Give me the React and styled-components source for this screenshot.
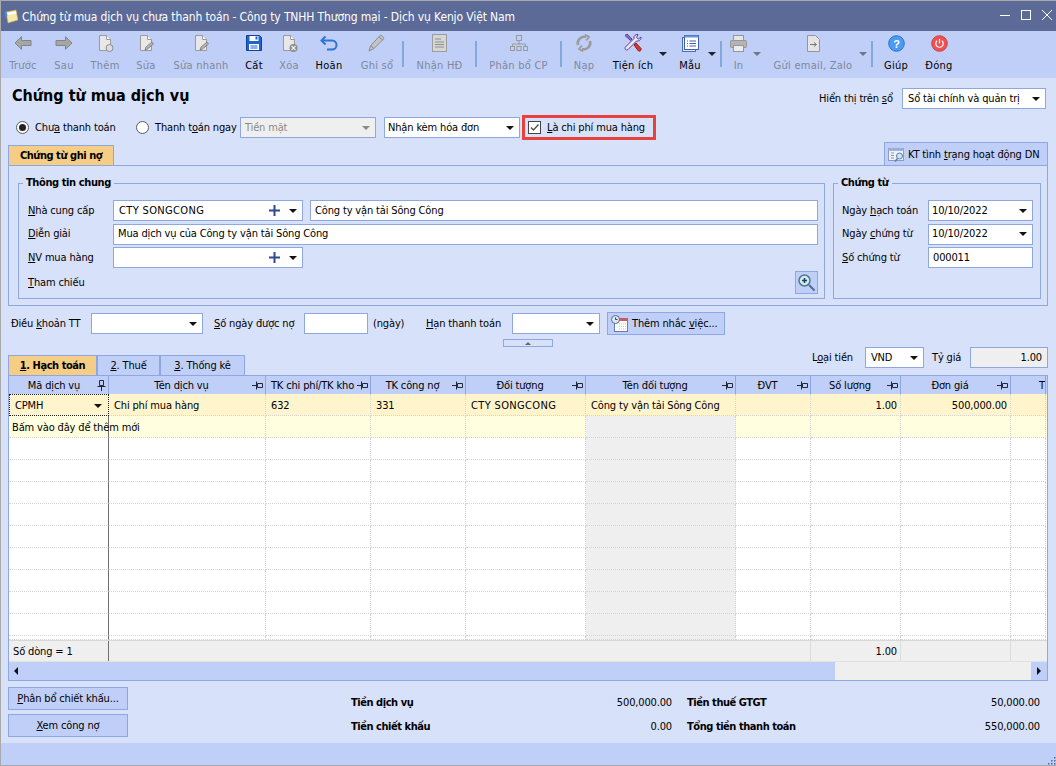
import styled, { createGlobalStyle } from 'styled-components'

const line = '#8ea7e0'
const soft = '#c0cff7'
const page = '#d8e1fa'

const GlobalStyle = createGlobalStyle`
  html, body { margin: 0; padding: 0; background: ${page}; }
  body {
    font: 11px/16px "DejaVu Sans Condensed", "DejaVu Sans", sans-serif;
    font-stretch: condensed;
    letter-spacing: -0.15px;
    color: #000;
  }
  * { box-sizing: border-box; }
  svg { flex: none; }
  u { text-underline-offset: 1px; }
`

const Window = styled.div`
  width: 1056px;
  height: 766px;
  display: flex;
  flex-direction: column;
  overflow: hidden;
  border-top: 1px solid #a9a9a9;
  border-bottom: 1px solid #a9a9a9;
  border-left: 1px solid #a9a9a9;
`
const TitleBar = styled.div`
  height: 30px;
  background: #5b6a97;
  color: #fff;
  display: flex;
  align-items: center;
  padding: 0 4px 0 3px;
`
const TitleText = styled.span`
  margin-left: 3px;
  padding-top: 1px;
  flex: 1;
  font-size: 12px;
  letter-spacing: -0.126px;
`
const WinButtons = styled.div`
  display: flex;
  align-items: center;
  gap: 11px;
  margin-bottom: 2px;
`
const Toolbar = styled.div`
  height: 47px;
  background: ${soft};
  display: flex;
  padding-left: 1px;
`
const Tool = styled.div`
  position: relative;
  width: ${p => p.$w}px;
  padding-top: 2px;
  display: flex;
  flex-direction: column;
  align-items: center;
  color: ${p => (p.$off ? '#7e889c' : '#000')};
`
const ToolIcon = styled.div`
  height: 20px;
  display: flex;
  align-items: center;
  justify-content: center;
`
const ToolLabel = styled.div`
  margin-top: 4px;
  line-height: 18px;
  letter-spacing: 0.25px;
  white-space: nowrap;
`
const ToolCaret = styled.span`
  position: absolute;
  top: 21px;
  right: ${p => p.$r}px;
  border: 4px solid transparent;
  border-top: 4px solid ${p => (p.$off ? '#6f7688' : '#1c2230')};
  border-bottom: 0;
`
const ToolSep = styled.div`
  width: 2px;
  height: 26px;
  margin-top: 10px;
  background: #82a8dc;
`
const Main = styled.div`
  flex: 1;
  padding: 0 8px 0 7px;
  display: flex;
  flex-direction: column;
  min-height: 0;
`
const HeadRow = styled.div`
  height: 37px;
  padding-top: 7px;
  display: flex;
`
const PageTitle = styled.h1`
  margin: 0;
  flex: 1;
  padding-left: 4px;
  font-size: 16px;
  line-height: 22px;
  font-weight: 700;
  letter-spacing: 0;
`
const BookLabel = styled.div`
  margin-top: 3px;
  width: 83px;
  line-height: 21px;
`
const BookCombo = styled.div`
  margin: 3px 2px 0 0;
`
const PayRow = styled.div`
  height: 25px;
  display: flex;
  align-items: center;
`
const Choice = styled.label`
  width: ${p => p.$w}px;
  display: flex;
  align-items: center;
  gap: 6px;
  margin-left: ${p => p.$ml || 0}px;
  white-space: nowrap;
`
const Radio = styled.span`
  width: 13px;
  height: 13px;
  border-radius: 50%;
  border: 1px solid #5c5c5c;
  background: #fff;
  display: flex;
  align-items: center;
  justify-content: center;
  &::after {
    content: '';
    display: ${p => (p.$on ? 'block' : 'none')};
    width: 7px;
    height: 7px;
    border-radius: 50%;
    background: #222;
  }
`
const ChoiceText = styled.span`
  padding-top: 1px;
`
const Field = styled.div`
  width: ${p => (p.$w ? `${p.$w}px` : 'auto')};
  flex: ${p => (p.$w ? 'none' : 1)};
  height: 21px;
  margin-left: ${p => p.$ml || 0}px;
  padding: 0 5px 0 ${p => p.$pl || 4}px;
  border: 1px solid ${line};
  background: ${p => (p.$gray ? '#efefef' : '#fff')};
  color: ${p => (p.$muted ? '#8a8a8a' : '#000')};
  display: flex;
  align-items: center;
  justify-content: ${p => (p.$right ? 'flex-end' : 'flex-start')};
  white-space: nowrap;
`
const FieldValue = styled.span`
  flex: ${p => (p.$right ? 'none' : 1)};
`
const Caps = styled.span`
  letter-spacing: 0.35px;
`
const Arrow = styled.span`
  width: 0;
  height: 0;
  margin-left: ${p => p.$ml ?? 6}px;
  border: 4px solid transparent;
  border-top: 4px solid ${p => (p.$muted ? '#8a8a8a' : '#111')};
  border-bottom: 0;
`
const CostBox = styled.div`
  width: 134px;
  height: 25px;
  margin-left: 2px;
  padding-left: 3px;
  border: 3px solid #e8423f;
  display: flex;
  align-items: center;
  gap: 6px;
  white-space: nowrap;
`
const CheckBox = styled.span`
  width: 13px;
  height: 13px;
  border: 1px solid #444;
  background: #fff;
  display: flex;
`
const TabRow = styled.div`
  height: 25px;
  display: flex;
  align-items: flex-end;
  justify-content: space-between;
`
const Tab = styled.div`
  width: ${p => p.$w}px;
  height: 20px;
  padding-top: 1px;
  border: 1px solid ${line};
  border-bottom: 0;
  background: ${p => (p.$on ? '#f5cd85' : soft)};
  font-weight: ${p => (p.$on ? 700 : 400)};
  letter-spacing: ${p => (p.$on ? '-0.45px' : '-0.15px')};
  display: flex;
  align-items: center;
  justify-content: center;
  white-space: nowrap;
`
const SideTab = styled(Tab)`
  height: 23px;
  gap: 2px;
  justify-content: flex-start;
  padding: 2px 0 0 3px;
`
const Panel = styled.div`
  height: 141px;
  padding: 17px 6px 6px 9px;
  border: 1px solid ${line};
  display: flex;
  gap: 8px;
`
const Group = styled.div`
  position: relative;
  flex: ${p => (p.$w ? 'none' : 1)};
  width: ${p => (p.$w ? `${p.$w}px` : 'auto')};
  height: 116px;
  padding: 16px 6px 0 ${p => p.$pl}px;
  border: 1px solid ${line};
  display: flex;
  flex-direction: column;
  gap: 2.5px;
`
const Legend = styled.div`
  position: absolute;
  top: -9px;
  left: 4px;
  padding: 0 3px;
  background: ${page};
  font-weight: 700;
  letter-spacing: -0.4px;
`
const FormRow = styled.div`
  height: 21px;
  display: flex;
  align-items: center;
`
const Label = styled.div`
  width: ${p => p.$w}px;
  flex: none;
  margin-left: ${p => p.$ml || 0}px;
  white-space: nowrap;
`
const RefRow = styled.div`
  height: 23px;
  margin-top: 0.5px;
  display: flex;
  align-items: center;
  justify-content: space-between;
`
const ZoomButton = styled.div`
  width: 23px;
  height: 23px;
  border: 1px solid ${line};
  background: ${soft};
  display: flex;
  align-items: center;
  justify-content: center;
`
const TermsRow = styled.div`
  height: 23px;
  margin-top: 6px;
  display: flex;
  align-items: center;
`
const RemindButton = styled.div`
  width: 118px;
  height: 23px;
  margin-left: 7px;
  padding-left: 3px;
  border: 1px solid ${line};
  background: ${soft};
  display: flex;
  align-items: center;
  gap: 4px;
  white-space: nowrap;
`
const Splitter = styled.div`
  width: 50px;
  height: 8px;
  margin: 4px 0 0 495px;
  border: 1px solid ${line};
  display: flex;
  align-items: center;
  justify-content: center;
  &::after {
    content: '';
    border: 3px solid transparent;
    border-bottom: 3px solid #666;
    border-top: 0;
  }
`
const GridTabs = styled.div`
  height: 28px;
  display: flex;
  align-items: flex-end;
`
const Currency = styled.div`
  margin-left: auto;
  align-self: flex-start;
  display: flex;
  align-items: center;
`
const GridBox = styled.div`
  height: 306px;
  border: 1px solid ${line};
  border-top: 0;
  display: flex;
  flex-direction: column;
  overflow: hidden;
`
const columns = '100px 157px 105px 95px 120px 150px 75px 90px 110px 35px'
const HeadCells = styled.div`
  height: 19px;
  flex: none;
  display: grid;
  grid-template-columns: ${columns};
  background: ${soft};
  border-top: 1px solid ${line};
`
const HeadCell = styled.div`
  border-right: 1px solid ${line};
  display: flex;
  align-items: center;
  padding: 1px 2px 0 ${p => p.$pl || 2}px;
  white-space: nowrap;
  overflow: hidden;
`
const HeadText = styled.span`
  flex: 1;
  text-align: ${p => (p.$left ? 'left' : 'center')};
`
const Row = styled.div`
  height: 22px;
  flex: none;
  display: grid;
  grid-template-columns: ${columns};
  background: ${p => p.$bg || '#fff'};
`
const Cell = styled.div`
  min-width: 0;
  padding: 2px ${p => (p.$num ? 3 : 0)}px 0 ${p => p.$pl ?? 5}px;
  border-right: 1px dotted #d4d4d4;
  border-bottom: 1px dotted #d4d4d4;
  background: ${p => (p.$gray ? '#efefef' : 'transparent')};
  display: flex;
  align-items: center;
  justify-content: ${p => (p.$num ? 'flex-end' : 'flex-start')};
  white-space: nowrap;
`
const FrozenCell = styled(Cell)`
  border-right: 1px solid #707070;
`
const FocusCell = styled(Cell)`
  border: 1px dotted #222;
  justify-content: space-between;
  padding: 1px 6px 0 5px;
`
const Filler = styled(Row)`
  height: 4px;
`
const FootRow = styled(Row)`
  background: #efefef;
  border-top: 1px solid #d8d8d8;
  border-bottom: 1px solid #e2e2e2;
`
const FootCell = styled.div`
  padding: 2px ${p => (p.$num ? 3 : 0)}px 0 ${p => p.$pl || 0}px;
  border-right: 1px solid ${p => p.$c || 'transparent'};
  display: flex;
  align-items: center;
  justify-content: ${p => (p.$num ? 'flex-end' : 'flex-start')};
`
const ScrollBar = styled.div`
  flex: 1;
  display: flex;
  background: #efefef;
`
const ScrollThumb = styled.div`
  width: 826px;
  background: ${soft};
  display: flex;
  align-items: center;
  padding-left: 5px;
`
const ScrollEnd = styled.div`
  width: 16px;
  margin-left: auto;
  background: ${soft};
  display: flex;
  align-items: center;
  justify-content: center;
`
const Tri = styled.span`
  border: 4px solid transparent;
  ${p => (p.$left
    ? 'border-right: 4px solid #111; border-left: 0;'
    : 'border-left: 4px solid #111; border-right: 0;')}
`
const Bottom = styled.div`
  flex: 1;
  display: flex;
`
const SideButtons = styled.div`
  width: 120px;
  padding-top: 6px;
  display: flex;
  flex-direction: column;
  gap: 4px;
`
const SideButton = styled.div`
  height: 23px;
  padding-top: 1px;
  border: 1px solid ${line};
  background: ${soft};
  display: flex;
  align-items: center;
  justify-content: center;
`
const Totals = styled.div`
  margin-left: 223px;
  padding-top: 10px;
  display: grid;
  grid-template-columns: 321px 353px;
  grid-auto-rows: 24px;
  column-gap: 15px;
`
const TotalItem = styled.div`
  display: flex;
  align-items: center;
  justify-content: space-between;
`
const TotalName = styled.span`
  font-weight: 700;
  letter-spacing: -0.45px;
`
const StatusBar = styled.div`
  position: relative;
  height: 22px;
  flex: none;
  background: ${soft};
`
const Grip = styled.svg`
  position: absolute;
  right: 0;
  bottom: 0;
`

// icons
const G = '#a6a6a6'
const GD = '#858585'

const ArrowLeftIcon = () => (
  <svg width="18" height="14" viewBox="0 0 18 14"><path d="M7.500.7 1 7l6.500 6.300V9.500h9.500v-5H7.500z" fill={G} stroke={GD} /></svg>
)
const ArrowRightIcon = () => (
  <svg width="18" height="14" viewBox="0 0 18 14"><path d="M10.500.7 17 7l-6.500 6.300V9.500H1v-5h9.500z" fill={G} stroke={GD} /></svg>
)
const Doc = ({ children }) => (
  <svg width="22" height="19" viewBox="0 0 22 19">
    <path d="M5.500 1.500h7l4 4v11h-11z" fill="#e8e8e8" stroke="#9a9a9a" />
    <path d="M12.500 1.500v4h4" fill="#fff" stroke="#9a9a9a" />
    {children}
  </svg>
)
const NewIcon = () => <Doc><circle cx="15.500" cy="14" r="3.500" fill="#ddd" stroke="#8b8b8b" /></Doc>
const EditIcon = () => <Doc><path d="m10 16 1-3 6-5 1.500 2-6 5z" fill="#b5b5b5" stroke="#777" strokeWidth=".8" /></Doc>
const DeleteIcon = () => (
  <Doc>
    <circle cx="15.500" cy="14" r="4" fill="#8e8e8e" />
    <path d="m13.500 12 4 4m0-4-4 4" stroke="#eee" strokeWidth="1.200" />
  </Doc>
)
const SaveIcon = () => (
  <svg width="18" height="18" viewBox="0 0 18 18">
    <path d="M1.500 1.500h13l2 2v13h-15z" fill="#1f63d0" stroke="#123f99" />
    <rect x="4.500" y="2" width="9" height="5" fill="#fff" />
    <rect x="10.500" y="2.500" width="2" height="3" fill="#1f63d0" />
    <rect x="4" y="10" width="10" height="6" fill="#fff" />
    <path d="M5.500 12h7m-7 2h7" stroke="#1f63d0" />
  </svg>
)
const UndoIcon = () => (
  <svg width="20" height="17" viewBox="0 0 20 17" fill="none">
    <path d="M3 5.500h10a4.500 4.500 0 0 1 0 9H8" stroke="#2e74d8" strokeWidth="2" />
    <path d="M6.500 1.500 2.500 5.500l4 4" stroke="#2e74d8" strokeWidth="2" />
  </svg>
)
const PencilIcon = () => (
  <svg width="20" height="20" viewBox="0 0 20 20">
    <path d="m2 18 1.500-5L13 2.500c1-1 4.500 2 3.500 3.500L7 15.500z" fill="#c4c4c4" stroke="#8d8d8d" />
    <path d="M4 13l3 2.500M12 4l3.500 3" stroke="#8d8d8d" />
  </svg>
)
const InvoiceIcon = () => (
  <svg width="16" height="19" viewBox="0 0 16 19">
    <rect x=".5" y=".5" width="14" height="17" fill="#d6d6d6" stroke="#9d9d9d" />
    <path d="M3 5h6m-6 3h9m-9 2.500h9m-9 2.500h9" stroke="#8f8f8f" />
  </svg>
)
const TreeIcon = () => (
  <svg width="20" height="18" viewBox="0 0 20 18" fill="none" stroke="#9a9a9a">
    <rect x="7.500" y="1.500" width="5" height="5" />
    <path d="M10 6.500v4M3.500 12v-2h13v2" />
    <rect x="1.500" y="12.500" width="4" height="4" />
    <rect x="8" y="12.500" width="4" height="4" />
    <rect x="14.500" y="12.500" width="4" height="4" />
  </svg>
)
const ReloadIcon = () => (
  <svg width="18" height="18" viewBox="0 0 18 18" fill="none" stroke="#9b9b9b" strokeWidth="2.600">
    <path d="M3 11a6.500 6.500 0 0 1 8-8" />
    <path d="M15 7a6.500 6.500 0 0 1-8 8" />
    <path d="m10 .5 4 2.500-3 3.500M8 17.500 4 15l3-3.500" strokeWidth="1.800" />
  </svg>
)
const ToolsIcon = () => (
  <svg width="20" height="20" viewBox="0 0 20 20">
    <path d="M15 1.500c-2.500-.5-4.500 1.500-4 4L2.500 14c-1.500 1.500.5 4 2.500 2.500L13.500 8c2.500.5 5-1.500 4.500-4l-2.500 2-2-1.500z" fill="#e8e4f5" stroke="#5b3c96" />
    <path d="M2 2.500 4 1l5 5-1.500 1.500z" fill="#8d6cc4" stroke="#5b3c96" />
    <path d="m11 12 2-2 5 5.500c.5 2-1 3-2.500 2.500z" fill="#e0322c" stroke="#90201c" />
  </svg>
)
const PagesIcon = () => (
  <svg width="17" height="17" viewBox="0 0 17 17">
    <rect x=".5" y="2.500" width="13" height="14" fill="#dce6fa" stroke="#4f6fae" />
    <rect x="2.500" y=".5" width="14" height="14" fill="#fff" stroke="#3a62ad" />
    <rect x="2.500" y=".5" width="14" height="2" fill="#6d93d8" />
    <path d="M5 6h1m1.500 0H14M5 8.500h1m1.500 0H14M5 11h1m1.500 0H14" stroke="#3a62ad" />
  </svg>
)
const PrintIcon = () => (
  <svg width="17" height="17" viewBox="0 0 17 17">
    <rect x="3.500" y=".5" width="10" height="6" fill="#e6e6e6" stroke="#969696" />
    <rect x=".5" y="5.500" width="16" height="7" rx="1" fill="#b4b4b4" stroke="#969696" />
    <rect x="3.500" y="10.500" width="10" height="6" fill="#ececec" stroke="#969696" />
  </svg>
)
const SendIcon = () => (
  <svg width="13" height="17" viewBox="0 0 13 17">
    <path d="M.5.500h8l4 4v12H.5z" fill="#e4e4e4" stroke="#969696" />
    <path d="M3 9.500h6m-2-2 2.500 2-2.500 2" fill="none" stroke="#777" />
  </svg>
)
const HelpIcon = () => (
  <svg width="17" height="17" viewBox="0 0 17 17">
    <circle cx="8.500" cy="8.500" r="7.800" fill="#4c9bf2" stroke="#2b6fcb" />
    <text x="8.500" y="12.500" textAnchor="middle" fontSize="11" fontWeight="700" fill="#fff" fontFamily="Liberation Sans">?</text>
  </svg>
)
const PowerIcon = () => (
  <svg width="17" height="17" viewBox="0 0 17 17" fill="none">
    <circle cx="8.500" cy="8.500" r="7.800" fill="#ec5350" stroke="#d43c3a" />
    <path d="M6 5.800a3.700 3.700 0 1 0 5 0M8.500 4v4.500" stroke="#fff" strokeWidth="1.200" />
  </svg>
)
const AppIcon = () => (
  <svg width="15" height="15" viewBox="0 0 15 15">
    <path d="M2 3 12 1l2 10-10 3z" fill="#f7e9a6" stroke="#bba86c" strokeWidth=".6" />
    <path d="M1 1.500 4 5 2 9 .5 5z" fill="#3f8fd6" />
    <path d="M3 4 12 2.500l.5 2-9 1.500z" fill="#fff" />
  </svg>
)
const MinIcon = () => <svg width="10" height="10" viewBox="0 0 10 10"><path d="M0 5.500h10" stroke="#fff" /></svg>
const MaxIcon = () => <svg width="10" height="10" viewBox="0 0 10 10"><rect x=".5" y=".5" width="9" height="9" fill="none" stroke="#fff" /></svg>
const CloseIcon = () => <svg width="10" height="10" viewBox="0 0 10 10"><path d="m0 0 10 10m0-10L0 10" stroke="#fff" /></svg>
const PlusIcon = () => <svg width="11" height="11" viewBox="0 0 11 11"><path d="M5.500 0v11M0 5.500h11" stroke="#2f4a8a" strokeWidth="2" /></svg>
const CheckMark = () => (
  <svg width="11" height="11" viewBox="0 0 11 11" fill="none"><path d="m2 5.500 2.500 2.500L9.500 2.500" stroke="#555" strokeWidth="1.500" /></svg>
)
const StatusIcon = () => (
  <svg width="18" height="16" viewBox="0 0 18 16">
    <rect x=".5" y="1.500" width="15" height="12" fill="#eef2fb" stroke="#8a9cc0" />
    <rect x=".5" y="1.500" width="15" height="2.500" fill="#9fb4dc" />
    <path d="M3 6h3M3 8.500h3M3 11h3" stroke="#7f93bb" />
    <circle cx="11.500" cy="9" r="3" fill="#cfe4f7" stroke="#5d7fb0" />
    <path d="m9.500 11.500-2.500 3" stroke="#5d7fb0" strokeWidth="1.500" />
  </svg>
)
const LoupeIcon = () => (
  <svg width="19" height="19" viewBox="0 0 19 19" fill="none">
    <circle cx="7.500" cy="7.500" r="5.500" fill="#d2ecea" stroke="#4e7a8c" strokeWidth="1.500" />
    <path d="M5 7.500h5M7.500 5v5" stroke="#1d3b66" strokeWidth="1.500" />
    <path d="m12 12 5.500 5.500" stroke="#4e6c9c" strokeWidth="2" />
  </svg>
)
const RemindIcon = () => (
  <svg width="17" height="17" viewBox="0 0 17 17">
    <rect x="3.500" y="3.500" width="13" height="13" fill="#fff" stroke="#5f7cb3" />
    <rect x="3.500" y="3.500" width="13" height="2.500" fill="#e5524f" />
    <path d="M8 9h7M8 11.500h7M8 14h7" stroke="#b9c4d8" strokeDasharray="1 1" />
    <circle cx="4.500" cy="4.500" r="4" fill="#dbe9f7" stroke="#56708f" />
    <path d="M4.500 2.500v2h2" fill="none" stroke="#2c3f5c" />
  </svg>
)
const PinDown = () => (
  <svg width="9" height="11" viewBox="0 0 9 11" fill="none" stroke="#20283a">
    <path d="M2.500.5h4v5h-4zM.5 6.500h8M4.500 6.500V11" />
  </svg>
)
const PinSide = () => (
  <svg width="11" height="9" viewBox="0 0 11 9" fill="none" stroke="#20283a">
    <path d="M5.500 2.500h5v4h-5zM4.500.5v8M4.500 4.500H0" />
  </svg>
)

const headers = [
  ['Tên dịch vụ'], ['TK chi phí/TK kho'], ['TK công nợ'], ['Đối tượng'],
  ['Tên đối tượng'], ['ĐVT'], ['Số lượng'], ['Đơn giá'],
]

const App = () => (
  <>
    <GlobalStyle />
    <Window>
      <TitleBar>
        <AppIcon />
        <TitleText>Chứng từ mua dịch vụ chưa thanh toán - Công ty TNHH Thương mại - Dịch vụ Kenjo Việt Nam</TitleText>
        <WinButtons>
          <MinIcon /><MaxIcon /><CloseIcon />
        </WinButtons>
      </TitleBar>

      <Toolbar>
        <Tool $w={42} $off><ToolIcon><ArrowLeftIcon /></ToolIcon><ToolLabel>Trước</ToolLabel></Tool>
        <Tool $w={40} $off><ToolIcon><ArrowRightIcon /></ToolIcon><ToolLabel>Sau</ToolLabel></Tool>
        <Tool $w={42} $off><ToolIcon><NewIcon /></ToolIcon><ToolLabel>Thêm</ToolLabel></Tool>
        <Tool $w={40} $off><ToolIcon><EditIcon /></ToolIcon><ToolLabel>Sửa</ToolLabel></Tool>
        <Tool $w={70} $off><ToolIcon><EditIcon /></ToolIcon><ToolLabel>Sửa nhanh</ToolLabel></Tool>
        <Tool $w={36}><ToolIcon><SaveIcon /></ToolIcon><ToolLabel>Cất</ToolLabel></Tool>
        <Tool $w={34} $off><ToolIcon><DeleteIcon /></ToolIcon><ToolLabel>Xóa</ToolLabel></Tool>
        <Tool $w={46}><ToolIcon><UndoIcon /></ToolIcon><ToolLabel>Hoãn</ToolLabel></Tool>
        <Tool $w={50} $off><ToolIcon><PencilIcon /></ToolIcon><ToolLabel>Ghi sổ</ToolLabel></Tool>
        <ToolSep />
        <Tool $w={71} $off><ToolIcon><InvoiceIcon /></ToolIcon><ToolLabel>Nhận HĐ</ToolLabel></Tool>
        <ToolSep />
        <Tool $w={83} $off><ToolIcon><TreeIcon /></ToolIcon><ToolLabel>Phân bổ CP</ToolLabel></Tool>
        <ToolSep />
        <Tool $w={44} $off><ToolIcon><ReloadIcon /></ToolIcon><ToolLabel>Nạp</ToolLabel></Tool>
        <Tool $w={54}><ToolIcon><ToolsIcon /></ToolIcon><ToolLabel>Tiện ích</ToolLabel><ToolCaret $r={-7} /></Tool>
        <Tool $w={60}><ToolIcon><PagesIcon /></ToolIcon><ToolLabel>Mẫu</ToolLabel><ToolCaret $r={4} /></Tool>
        <ToolSep />
        <Tool $w={33} $off><ToolIcon><PrintIcon /></ToolIcon><ToolLabel>In</ToolLabel><ToolCaret $off $r={-6} /></Tool>
        <Tool $w={116} $off><ToolIcon><SendIcon /></ToolIcon><ToolLabel>Gửi email, Zalo</ToolLabel><ToolCaret $off $r={4} /></Tool>
        <ToolSep />
        <Tool $w={46}><ToolIcon><HelpIcon /></ToolIcon><ToolLabel>Giúp</ToolLabel></Tool>
        <Tool $w={40}><ToolIcon><PowerIcon /></ToolIcon><ToolLabel>Đóng</ToolLabel></Tool>
      </Toolbar>

      <Main>
        <HeadRow>
          <PageTitle>Chứng từ mua dịch vụ</PageTitle>
          <BookLabel>Hiển thị trên <u>s</u>ổ</BookLabel>
          <BookCombo>
            <Field $w={144} $pl={5}><FieldValue>Sổ tài chính và quản trị</FieldValue><Arrow /></Field>
          </BookCombo>
        </HeadRow>

        <PayRow>
          <Choice $w={120} $ml={8}><Radio $on /><ChoiceText>Chư<u>a</u> thanh toán</ChoiceText></Choice>
          <Choice $w={104}><Radio /><ChoiceText>Thanh t<u>o</u>án ngay</ChoiceText></Choice>
          <Field $w={136} $gray $muted><FieldValue>Tiền mặt</FieldValue><Arrow $muted /></Field>
          <Field $w={136} $ml={8} $pl={3}><FieldValue>Nhận kèm hóa đơn</FieldValue><Arrow /></Field>
          <CostBox>
            <CheckBox><CheckMark /></CheckBox>
            <ChoiceText><u>L</u>à chi phí mua hàng</ChoiceText>
          </CostBox>
        </PayRow>

        <TabRow>
          <Tab $w={106} $on>Chứng từ ghi nợ</Tab>
          <SideTab $w={164}><StatusIcon /><span>KT tình <u>t</u>rạng hoạt động DN</span></SideTab>
        </TabRow>

        <Panel>
          <Group $pl={9}>
            <Legend>Thông tin chung</Legend>
            <FormRow>
              <Label $w={85}><u>N</u>hà cung cấp</Label>
              <Field $w={190} $pl={5}><FieldValue><Caps>CTY SONGCONG</Caps></FieldValue><PlusIcon /><Arrow $ml={9} /></Field>
              <Field $ml={7}><FieldValue>Công ty vận tải Sông Công</FieldValue></Field>
            </FormRow>
            <FormRow>
              <Label $w={85}><u>D</u>iễn giải</Label>
              <Field $pl={4}><FieldValue>Mua dịch vụ của Công ty vận tải Sông Công</FieldValue></Field>
            </FormRow>
            <FormRow>
              <Label $w={85}><u>N</u>V mua hàng</Label>
              <Field $w={190}><FieldValue /><PlusIcon /><Arrow $ml={9} /></Field>
            </FormRow>
            <RefRow>
              <Label $w={85}><u>T</u>ham chiếu</Label>
              <ZoomButton><LoupeIcon /></ZoomButton>
            </RefRow>
          </Group>
          <Group $w={208} $pl={8}>
            <Legend>Chứng từ</Legend>
            <FormRow>
              <Label $w={86}>Ngày <u>h</u>ạch toán</Label>
              <Field $w={105} $pl={3}><FieldValue>10/10/2022</FieldValue><Arrow /></Field>
            </FormRow>
            <FormRow>
              <Label $w={86}>Ngày <u>c</u>hứng từ</Label>
              <Field $w={105} $pl={3}><FieldValue>10/10/2022</FieldValue><Arrow /></Field>
            </FormRow>
            <FormRow>
              <Label $w={86}><u>S</u>ố chứng từ</Label>
              <Field $w={105}><FieldValue>000011</FieldValue></Field>
            </FormRow>
          </Group>
        </Panel>

        <TermsRow>
          <Label $w={80} $ml={3}>Điều <u>k</u>hoản TT</Label>
          <Field $w={112}><FieldValue /><Arrow /></Field>
          <Label $w={90} $ml={11}><u>S</u>ố ngày được nợ</Label>
          <Field $w={64} />
          <Label $w={53} $ml={5}>(ngày)</Label>
          <Label $w={86}><u>H</u>ạn thanh toán</Label>
          <Field $w={88}><FieldValue /><Arrow /></Field>
          <RemindButton><RemindIcon /><span>Thêm nhắc <u>v</u>iệc...</span></RemindButton>
        </TermsRow>

        <Splitter />

        <GridTabs>
          <Tab $w={89} $on><span><u>1</u>. Hạch toán</span></Tab>
          <Tab $w={63}><span><u>2</u>. Thuế</span></Tab>
          <Tab $w={85}><span><u>3</u>. Thống kê</span></Tab>
          <Currency>
            <Label $w={53}>L<u>o</u>ại tiền</Label>
            <Field $w={59} $pl={5}><FieldValue>VND</FieldValue><Arrow /></Field>
            <Label $w={38} $ml={8}>Tỷ <u>g</u>iá</Label>
            <Field $w={78} $gray $right><FieldValue $right>1.00</FieldValue></Field>
          </Currency>
        </GridTabs>

        <GridBox>
          <HeadCells>
            <HeadCell><HeadText>Mã dịch vụ</HeadText><PinDown /></HeadCell>
            {headers.map(([name]) => (
              <HeadCell key={name}><HeadText>{name}</HeadText><PinSide /></HeadCell>
            ))}
            <HeadCell $pl={28}><HeadText $left>T</HeadText></HeadCell>
          </HeadCells>

          <Row $bg="#fff4cc">
            <FocusCell>CPMH<Arrow /></FocusCell>
            <Cell>Chi phí mua hàng</Cell>
            <Cell>632</Cell>
            <Cell>331</Cell>
            <Cell><Caps>CTY SONGCONG</Caps></Cell>
            <Cell>Công ty vận tải Sông Công</Cell>
            <Cell />
            <Cell $num>1.00</Cell>
            <Cell $num>500,000.00</Cell>
            <Cell />
          </Row>
          <Row $bg="#ffffe0">
            <FrozenCell $pl={3}>Bấm vào đây để thêm mới</FrozenCell>
            <Cell /><Cell /><Cell /><Cell />
            <Cell $gray />
            <Cell /><Cell /><Cell /><Cell />
          </Row>
          {Array.from({ length: 9 }).map((_, i) => (
            <Row key={i}>
              <FrozenCell />
              <Cell /><Cell /><Cell /><Cell />
              <Cell $gray />
              <Cell /><Cell /><Cell /><Cell />
            </Row>
          ))}
          <Filler>
            <FrozenCell />
            <Cell /><Cell /><Cell /><Cell />
            <Cell $gray />
            <Cell /><Cell /><Cell /><Cell />
          </Filler>

          <FootRow>
            <FootCell $pl={4} $c="#707070">Số dòng = 1</FootCell>
            <FootCell /><FootCell /><FootCell /><FootCell /><FootCell />
            <FootCell $c="#dcdcdc" />
            <FootCell $num $c="#dcdcdc">1.00</FootCell>
            <FootCell $c="#dcdcdc" />
            <FootCell />
          </FootRow>

          <ScrollBar>
            <ScrollThumb><Tri $left /></ScrollThumb>
            <ScrollEnd><Tri /></ScrollEnd>
          </ScrollBar>
        </GridBox>

        <Bottom>
          <SideButtons>
            <SideButton><span><u>P</u>hân bổ chiết khấu...</span></SideButton>
            <SideButton><span><u>X</u>em công nợ</span></SideButton>
          </SideButtons>
          <Totals>
            <TotalItem><TotalName>Tiền dịch vụ</TotalName><span>500,000.00</span></TotalItem>
            <TotalItem><TotalName>Tiền thuế GTGT</TotalName><span>50,000.00</span></TotalItem>
            <TotalItem><TotalName>Tiền chiết khấu</TotalName><span>0.00</span></TotalItem>
            <TotalItem><TotalName>Tổng tiền thanh toán</TotalName><span>550,000.00</span></TotalItem>
          </Totals>
        </Bottom>
      </Main>

      <StatusBar>
        <Grip width="8" height="8" viewBox="0 0 8 8" fill="#4f6aa8">
          <rect x="6" y="0" width="1.500" height="1.500" />
          <rect x="3" y="3" width="1.500" height="1.500" />
          <rect x="6" y="3" width="1.500" height="1.500" />
          <rect x="0" y="6" width="1.500" height="1.500" />
          <rect x="3" y="6" width="1.500" height="1.500" />
          <rect x="6" y="6" width="1.500" height="1.500" />
        </Grip>
      </StatusBar>
    </Window>
  </>
)

export default App
